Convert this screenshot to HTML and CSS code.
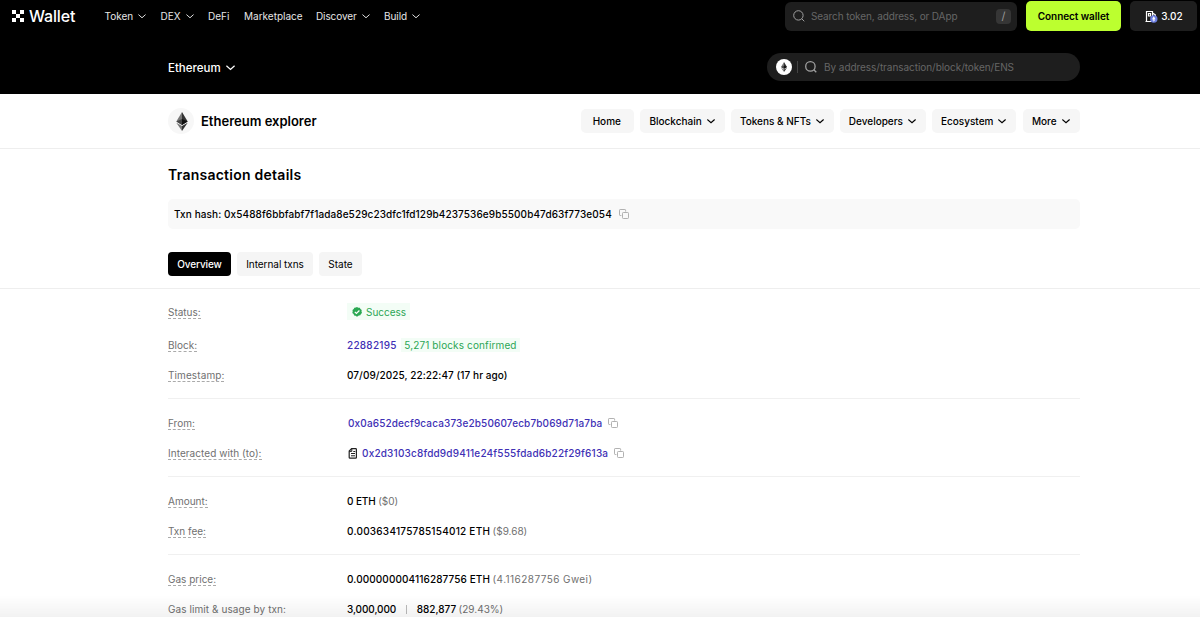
FILE: index.html
```html
<!DOCTYPE html>
<html lang="en">
<head>
<meta charset="utf-8">
<title>Ethereum explorer</title>
<link rel="stylesheet" href="styles.css">
</head>
<body>
<svg class="defs" width="0" height="0" aria-hidden="true">
  <symbol id="chev" viewBox="0 0 10 6"><path d="M1 1l4 3.6L9 1" fill="none" stroke="currentColor" stroke-linecap="square"/></symbol>
  <symbol id="search" viewBox="0 0 12 12"><circle cx="5.4" cy="5.4" r="4.7" fill="none" stroke="currentColor"/><path d="M8.8 8.8l2.5 2.5" stroke="currentColor"/></symbol>
  <symbol id="copy" viewBox="0 0 10 10"><path d="M6.6 2.6V1.2Q6.6.5 5.9.5H1.2Q.5.5.5 1.2v4.6q0 .7.7.7h1.2" fill="none" stroke="currentColor"/><rect x="3.500" y="3.500" width="6" height="6" rx=".8" fill="none" stroke="currentColor"/></symbol>
  <symbol id="eth" viewBox="0 0 12 20"><path d="M6 0L0 10l6 3.600z" fill="#777"/><path d="M6 0l6 10-6 3.600z" fill="#333"/><path d="M0 10l6-2.700v6.300z" fill="#444"/><path d="M6 7.300l6 2.700-6 3.600z" fill="#111"/><path d="M0 11.300L6 20v-5.200z" fill="#777"/><path d="M12 11.300L6 20v-5.200z" fill="#333"/></symbol>
</svg>

<header class="top">
  <div class="bar">
    <a class="logo">
      <svg width="12" height="12" viewBox="0 0 12 12" fill="#fff"><path d="M0 0h4v4H0zM8 0h4v4H8zM4 4h4v4H4zM0 8h4v4H0zM8 8h4v4H8z"/></svg>
      <span>Wallet</span>
    </a>
    <nav class="menu">
      <a class="m1">Token<svg class="chev"><use href="#chev"/></svg></a>
      <a class="m2">DEX<svg class="chev"><use href="#chev"/></svg></a>
      <a class="m3">DeFi</a>
      <a class="m4">Marketplace</a>
      <a class="m5">Discover<svg class="chev"><use href="#chev"/></svg></a>
      <a class="m6">Build<svg class="chev"><use href="#chev"/></svg></a>
    </nav>
    <div class="find"><svg class="glass"><use href="#search"/></svg><span class="hint">Search token, address, or DApp</span><kbd>/</kbd></div>
    <button class="connect"><span>Connect wallet</span></button>
    <div class="gas">
      <svg width="13" height="13" viewBox="0 0 13 13"><path d="M1.500 11.500V1.500h6v9M.5 11.500h7M3.500 3.500h2v2.500h-2zM7.500 3l2.800 1.800v4" fill="none" stroke="#fff" stroke-width="1.200"/><circle cx="8.800" cy="9" r="3.700" fill="#6d7fe0"/><path d="M8.800 6.300L7.200 9l1.600 1 1.600-1zM7.200 9.600l1.600 2.200 1.600-2.200-1.600.9z" fill="#fff"/></svg>
      <span>3.02</span>
    </div>
  </div>
  <div class="chain wrap">
    <div class="network"><span>Ethereum</span><svg class="chev"><use href="#chev"/></svg></div>
    <div class="lookup"><span class="coin"><svg width="6" height="10"><use href="#eth"/></svg></span><i></i><svg class="glass"><use href="#search"/></svg><span class="hint">By address/transaction/block/token/ENS</span></div>
  </div>
</header>

<section class="explorer">
  <div class="wrap">
    <div class="brand"><span class="disc"><svg width="12" height="19"><use href="#eth"/></svg></span><h2>Ethereum explorer</h2></div>
    <nav class="pills">
      <a class="p1"><span>Home</span></a>
      <a class="p2"><span>Blockchain</span><svg class="chev"><use href="#chev"/></svg></a>
      <a class="p3"><span>Tokens &amp; NFTs</span><svg class="chev"><use href="#chev"/></svg></a>
      <a class="p4"><span>Developers</span><svg class="chev"><use href="#chev"/></svg></a>
      <a class="p5"><span>Ecosystem</span><svg class="chev"><use href="#chev"/></svg></a>
      <a class="p6"><span>More</span><svg class="chev"><use href="#chev"/></svg></a>
    </nav>
  </div>
</section>

<main>
  <div class="wrap head">
    <h1>Transaction details</h1>
    <div class="hash"><span>Txn hash: 0x5488f6bbfabf7f1ada8e529c23dfc1fd129b4237536e9b5500b47d63f773e054</span><svg class="copy"><use href="#copy"/></svg></div>
    <div class="tabs"><a class="on t1">Overview</a><a class="t2">Internal txns</a><a class="t3">State</a></div>
  </div>
  <div class="details">
    <dl class="wrap">
      <div class="group g1">
        <div class="row tall"><dt><span>Status:</span></dt><dd><span class="ok"><svg width="10" height="10" viewBox="0 0 10 10"><path d="M5 0l1.300.7 1.500.1.700 1.300 1.200.9-.2 1.500.5 1.400-1.100 1-.6 1.400-1.500.2L5 9.700l-1.400-.9-1.500-.4-.5-1.400L.3 5.900l.4-1.500L.5 2.900l1.200-.9.700-1.300 1.500-.1z" fill="#2aa852"/><path d="M2.800 4.900l1.600 1.600 3-3" fill="none" stroke="#fff" stroke-width="1.200"/></svg><span>Success</span></span></dd></div>
        <div class="row"><dt><span>Block:</span></dt><dd><a class="block">22882195</a><span class="conf">5,271 blocks confirmed</span></dd></div>
        <div class="row"><dt><span class="stamp">Timestamp:</span></dt><dd><b class="time">07/09/2025, 22:22:47 (17 hr ago)</b></dd></div>
      </div>
      <div class="group">
        <div class="row"><dt><span>From:</span></dt><dd class="from"><a class="sender">0x0a652decf9caca373e2b50607ecb7b069d71a7ba</a><svg class="copy"><use href="#copy"/></svg></dd></div>
        <div class="row"><dt><span class="with">Interacted with (to):</span></dt><dd class="from"><svg class="doc" width="10" height="11" viewBox="0 0 10 11"><path d="M3.600.7h4q.8 0 .8.8v7.900q0 .8-.8.8H2q-.8 0-.8-.8V3.100z" fill="none" stroke="#222" stroke-width="1.200"/><path d="M3.800.8v2.600H1.200M5.300 3.500h2M3 5.500h4M3 7.800h4" fill="none" stroke="#222"/></svg><a class="target">0x2d3103c8fdd9d9411e24f555fdad6b22f29f613a</a><svg class="copy"><use href="#copy"/></svg></dd></div>
      </div>
      <div class="group">
        <div class="row"><dt><span>Amount:</span></dt><dd><b class="tight">0 ETH</b><em>($0)</em></dd></div>
        <div class="row"><dt><span>Txn fee:</span></dt><dd><b class="fee">0.003634175785154012 ETH</b><em>($9.68)</em></dd></div>
      </div>
      <div class="group">
        <div class="row"><dt><span>Gas price:</span></dt><dd><b class="price">0.000000004116287756 ETH</b><em class="gwei">(4.116287756 Gwei)</em></dd></div>
        <div class="row"><dt><span class="plain">Gas limit &amp; usage by txn:</span></dt><dd><b class="tight">3,000,000</b><i class="split"></i><b>882,877</b><em>(29.43%)</em></dd></div>
      </div>
    </dl>
  </div>
</main>
<div class="fade"></div>
</body>
</html>
```
FILE: styles.css
```css
* { box-sizing: border-box; }
body { margin: 0; height: 617px; overflow: hidden; background: #fff; color: #000; font: 10px/14px Inter, "Liberation Sans", sans-serif; white-space: nowrap; }
h1, h2, dl, dd { margin: 0; }
em, i { font-style: normal; }
b, dd a { font-weight: 500; }
svg { flex: none; }
.defs { position: absolute; }
.wrap { width: 912px; margin-left: 168px; }
.chev { width: 8px; height: 5px; stroke-width: 1.2; }
.top { background: #000; color: #fff; height: 94px; }
.bar { display: flex; align-items: center; height: 32px; padding-left: 12px; }
.logo { display: flex; align-items: center; gap: 5px; width: 92.5px; font-size: 16px; font-weight: 500; letter-spacing: -.15px; }
.menu { display: flex; width: 680.5px; color: #e6e6e6; }
.menu a { display: flex; align-items: center; gap: 5px; }
.m1 { width: 56px; } .m2 { width: 47.5px; } .m3 { width: 36px; } .m4 { width: 72px; }
.m5 { width: 68px; letter-spacing: -.1px; }
.m6 { letter-spacing: -.05px; }
.find { display: flex; align-items: center; width: 232px; height: 29px; padding: 0 6px 0 8px; border-radius: 6px; background: #1e1e1e; color: #666; }
.glass { width: 12px; height: 12px; color: #a0a0a0; margin-right: 6px; }
.find .hint { flex: 1; letter-spacing: -.12px; }
kbd { width: 15px; height: 15px; border-radius: 4px; background: #363636; color: #999; font: 11px/15px Inter, sans-serif; text-align: center; }
.connect { width: 95px; height: 30px; margin-left: 9px; padding: 0; border: 0; border-radius: 5px; background: #bcff2f; color: #000; font: 600 10px/14px Inter, sans-serif; letter-spacing: -.05px; }
.gas { display: flex; align-items: center; justify-content: center; gap: 3px; width: 67px; height: 30px; margin-left: 9px; padding-left: 1px; border-radius: 5px; background: #1e1e1e; font-weight: 500; }
.chain { display: flex; align-items: center; justify-content: space-between; height: 70px; }
.network { display: flex; align-items: center; gap: 5px; padding-top: 1px; font-size: 11.5px; font-weight: 500; }
.network .chev { width: 9px; height: 6px; stroke-width: 1.5; }
.lookup { display: flex; align-items: center; width: 313px; height: 28px; padding-left: 9px; border-radius: 14px; background: #1e1e1e; color: #666; letter-spacing: -.05px; }
.coin { display: flex; align-items: center; justify-content: center; width: 16px; height: 16px; border-radius: 50%; background: #fff; }
.lookup i { width: 1px; height: 12px; margin: 0 7px 0 5px; background: #444; }
.lookup .glass { margin-right: 7px; stroke-width: 1.3; }
.explorer { height: 55px; border-bottom: 1px solid #eee; }
.explorer .wrap { display: flex; align-items: center; justify-content: space-between; height: 54px; }
.brand { display: flex; align-items: center; gap: 7px; }
.brand h2 { font-size: 13px; font-weight: 600; }
.disc { display: flex; align-items: center; justify-content: center; width: 26px; height: 26px; padding-left: 1px; border-radius: 50%; background: #f7f7f7; }
.pills { display: flex; gap: 6.3px; }
.pills a { display: flex; align-items: center; justify-content: center; gap: 5px; height: 24px; padding-right: 1px; border-radius: 5px; background: #f6f6f6; font-weight: 500; }
.pills .chev { stroke-width: 1.5; }
.p1 { width: 53.5px; } .p2 { width: 84.5px; } .p3 { width: 102.5px; } .p4 { width: 86px; } .p5 { width: 84px; } .p6 { width: 57.5px; }
h1 { padding-top: 17px; font-size: 14px; line-height: 18px; font-weight: 600; letter-spacing: .25px; }
.head { height: 139px; }
.hash { display: flex; align-items: center; gap: 7px; height: 30px; margin-top: 15px; padding-left: 6px; border-radius: 5px; background: #f9f9f9; font-weight: 500; letter-spacing: .097px; }
.copy { width: 10px; height: 10px; color: #a8a8a8; stroke-width: .9; }
.tabs { display: flex; gap: 6px; margin-top: 23px; }
.tabs a { height: 24px; border-radius: 4px; background: #f5f5f5; line-height: 24px; text-align: center; }
.tabs .on { background: #000; color: #fff; font-weight: 500; }
.t1 { width: 63px; letter-spacing: -.1px; } .t2 { width: 76px; letter-spacing: -.05px; } .t3 { width: 43px; }
.details { border-top: 1px solid #eee; }
.group { display: flex; flex-direction: column; gap: 12px; height: 78px; padding-top: 15px; border-bottom: 1px solid #f0f0f0; }
.g1 { height: 110px; padding-top: 12px; }
.row { display: flex; height: 18px; align-items: center; }
.row.tall { height: 21px; margin-bottom: 2px; }
dt { width: 179px; color: #707070; }
dt span { display: inline-block; height: 14px; border-bottom: 1px dashed #aaa; line-height: 14px; }
dt .plain { border: 0; letter-spacing: .08px; }
.stamp { letter-spacing: .1px; }
.with { letter-spacing: .05px; }
dd { display: flex; align-items: center; }
dd a { color: #4030b5; }
dd em { margin-left: 2.5px; color: #707070; }
.ok { display: flex; align-items: center; gap: 4px; height: 17px; padding: 0 4px 0 5px; background: #f3fdf6; color: #2ba655; }
.block { letter-spacing: .25px; }
.conf { height: 14px; margin-left: 4.5px; padding: 0 3px; background: #f3fdf6; color: #2ba655; letter-spacing: .13px; }
.time { letter-spacing: .07px; }
.from { padding-left: 1px; }
.sender { letter-spacing: .135px; }
.target { letter-spacing: .185px; }
.fee { letter-spacing: .24px; }
.price { letter-spacing: .1px; }
.gwei { letter-spacing: .43px; }
.tight { letter-spacing: -.1px; }
.doc { margin-right: 4px; }
.from .copy { margin-left: 6px; }
.split { width: 1px; height: 9px; margin: 0 10px 0 9.5px; background: #bbb; }
.fade { position: fixed; left: 0; right: 0; bottom: 0; height: 22px; background: linear-gradient(rgba(0,0,0,0), rgba(0,0,0,.05)); }
```
